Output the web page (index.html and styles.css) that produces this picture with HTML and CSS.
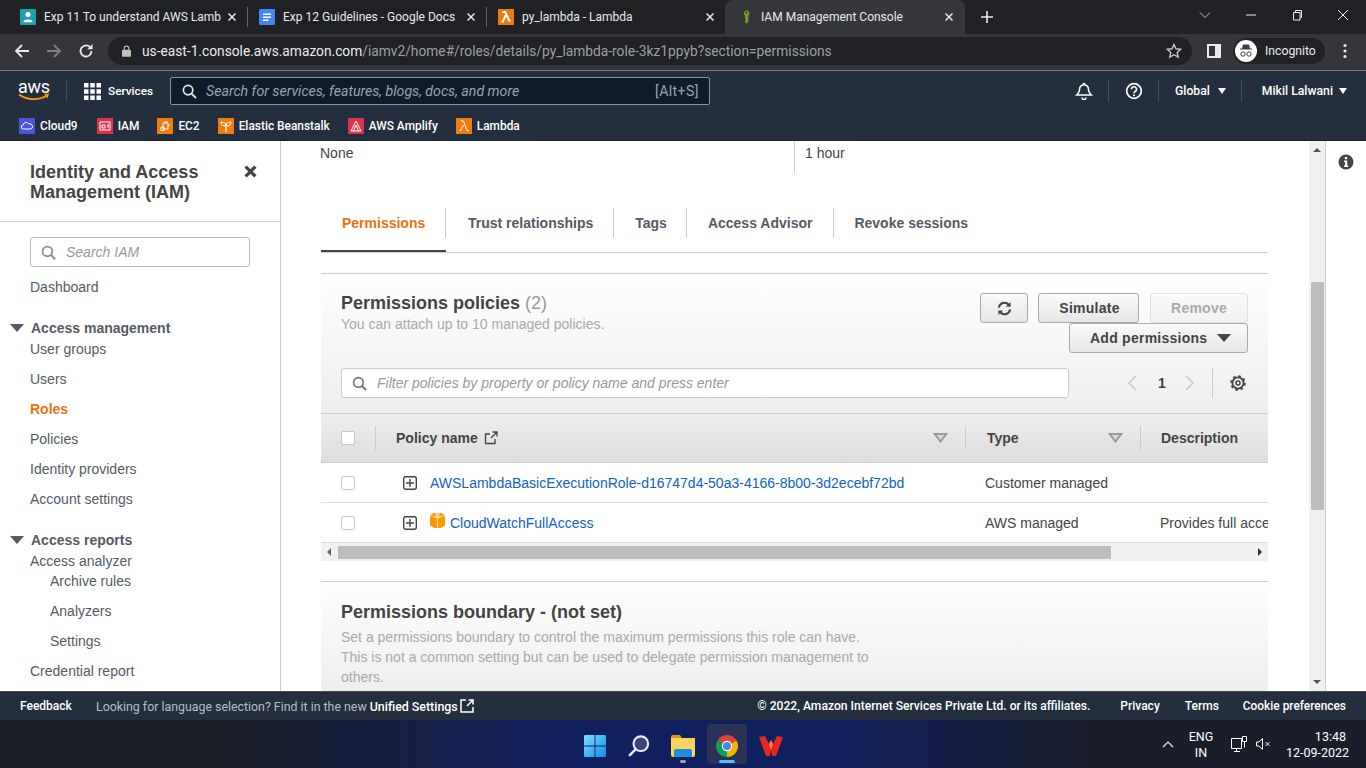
FILE: index.html
```html
<!DOCTYPE html>
<html lang="en">
<head>
    <meta charset="UTF-8">
    <title>IAM Management Console</title>
    <link rel="stylesheet" href="styles.css">
</head>
<body>

<!-- browser tabs -->
<div class="tabstrip">
    <div class="tab tab-first">
        <svg class="favicon" viewBox="0 0 16 16"><rect width="16" height="16" rx="1" fill="#1c9fb0"/><circle cx="8" cy="5.500" r="2.500" fill="#fff"/><path d="M3.500 12.500c0-2.800 9-2.800 9 0v.7h-9z" fill="#fff"/></svg>
        <span class="tab-title">Exp 11 To understand AWS Lamb</span>
        <svg class="tab-close" viewBox="0 0 8 8"><path d="M.5.5l7 7M7.500.5l-7 7" stroke="#e8eaed" stroke-width="1.500"/></svg>
    </div>
    <span class="tab-sep"></span>
    <div class="tab tab-second">
        <svg class="favicon" viewBox="0 0 16 16"><path d="M1.500 0H16v14.500a1.500 1.500 0 0 1-1.500 1.500h-13A1.500 1.500 0 0 1 0 14.500v-13A1.500 1.500 0 0 1 1.500 0z" fill="#4285f4"/><path d="M4 4.500h8v1.500H4zM4 7.500h8v1.500H4zM4 10.500h5.500v1.500H4z" fill="#fff"/></svg>
        <span class="tab-title">Exp 12 Guidelines - Google Docs</span>
        <svg class="tab-close" viewBox="0 0 8 8"><path d="M.5.5l7 7M7.500.5l-7 7" stroke="#e8eaed" stroke-width="1.500"/></svg>
    </div>
    <span class="tab-sep"></span>
    <div class="tab tab-third">
        <svg class="favicon" viewBox="0 0 16 16"><rect width="16" height="16" fill="#ed7d13"/><path d="M4.500 3h2.800l3.700 8.500h1.500M7.600 6.500L4.300 13.500" fill="none" stroke="#fff" stroke-width="2"/></svg>
        <span class="tab-title">py_lambda - Lambda</span>
        <svg class="tab-close" viewBox="0 0 8 8"><path d="M.5.5l7 7M7.500.5l-7 7" stroke="#e8eaed" stroke-width="1.500"/></svg>
    </div>
    <div class="tab tab-active">
        <svg class="favicon favicon-key" viewBox="0 0 12 18"><path d="M6 0a4 4 0 0 1 2.500 7.100V15L6 18l-2-2v-1.500l1.200-1-1.200-1 1-1-1-1V7.100A4 4 0 0 1 6 0z" fill="#6f9a2e"/><circle cx="6" cy="3" r="1.200" fill="#2c3a1a"/></svg>
        <span class="tab-title">IAM Management Console</span>
        <svg class="tab-close" viewBox="0 0 8 8"><path d="M.5.5l7 7M7.500.5l-7 7" stroke="#e8eaed" stroke-width="1.500"/></svg>
    </div>
    <svg class="new-tab" viewBox="0 0 12 12"><path d="M6 0v12M0 6h12" stroke="#e8eaed" stroke-width="1.600"/></svg>
    <div class="win-controls">
        <svg viewBox="0 0 12 12"><path d="M1 3.500l5 5 5-5" fill="none" stroke="#bdc1c6"/></svg>
        <svg viewBox="0 0 12 12"><path d="M1 6h10" stroke="#e8eaed"/></svg>
        <svg viewBox="0 0 12 12"><path d="M2.500 3.500h6.500v7.500H2.500zM4.500 3.500V1.500H10.500v7H9" fill="none" stroke="#e8eaed"/></svg>
        <svg viewBox="0 0 12 12"><path d="M1 1l10 10M11 1L1 11" stroke="#e8eaed"/></svg>
    </div>
</div>

<!-- address bar -->
<div class="toolbar">
    <svg class="tool-btn" viewBox="0 0 16 16"><path d="M15 8H2M8 2L2 8l6 6" fill="none" stroke="#e8eaed" stroke-width="1.800"/></svg>
    <svg class="tool-btn" viewBox="0 0 16 16"><path d="M1 8h13M8 2l6 6-6 6" fill="none" stroke="#7d7f83" stroke-width="1.800"/></svg>
    <svg class="tool-btn" viewBox="0 0 16 16"><path d="M13.500 8a5.500 5.500 0 1 1-1.700-4" fill="none" stroke="#e8eaed" stroke-width="1.800"/><path d="M14.500 1v5.200H9.300z" fill="#e8eaed"/></svg>
    <div class="omnibox">
        <svg class="lock" viewBox="0 0 10 13"><path d="M2.500 5V3.500a2.500 2.500 0 0 1 5 0V5" fill="none" stroke="#bdc1c6" stroke-width="1.300"/><rect y="5" width="10" height="8" rx="1" fill="#bdc1c6"/></svg>
        <span class="url"><span class="url-host">us-east-1.console.aws.amazon.com</span>/iamv2/home#/roles/details/py_lambda-role-3kz1ppyb?section=permissions</span>
        <svg class="star" viewBox="0 0 16 16"><path d="M8 1.500l2 4.300 4.700.5-3.500 3.200 1 4.600L8 11.700l-4.200 2.400 1-4.600L1.300 6.300 6 5.800z" fill="none" stroke="#c4c7cb" stroke-width="1.400"/></svg>
    </div>
    <svg class="side-panel" viewBox="0 0 14 14"><path d="M0 0h14v14H0z" fill="#e8eaed"/><path d="M2 2h6v10H2z" fill="#35363a"/></svg>
    <div class="profile">
        <svg class="profile-pic" viewBox="0 0 22 22"><circle cx="11" cy="11" r="11" fill="#fff"/><path d="M8 4.500h6l1 4h2v1H5v-1h2z" fill="#3c4043"/><circle cx="8" cy="14" r="2.200" fill="none" stroke="#3c4043"/><circle cx="14" cy="14" r="2.200" fill="none" stroke="#3c4043"/></svg>
        <span>Incognito</span>
    </div>
    <svg class="kebab" viewBox="0 0 4 16"><circle cx="2" cy="2.500" r="1.600" fill="#e8eaed"/><circle cx="2" cy="8" r="1.600" fill="#e8eaed"/><circle cx="2" cy="13.500" r="1.600" fill="#e8eaed"/></svg>
</div>

<!-- aws console header -->
<header class="aws-nav">
    <div class="nav-top">
        <div class="aws-logo">
            <span>aws</span>
            <svg viewBox="0 0 32 9"><path d="M1 1.500c8 6 20 6 28 1" fill="none" stroke="#f90" stroke-width="1.800"/><path d="M26 1l5-.5-1.500 5z" fill="#f90"/></svg>
        </div>
        <span class="nav-sep sep-logo"></span>
        <svg class="grid-icon" viewBox="0 0 17 17"><path d="M0 0h4.500v4.500H0zM6.250 0h4.500v4.500h-4.500zM12.500 0H17v4.500h-4.500zM0 6.250h4.500v4.500H0zM6.250 6.250h4.500v4.500h-4.500zM12.500 6.250H17v4.500h-4.500zM0 12.500h4.500V17H0zM6.250 12.500h4.500V17h-4.500zM12.500 12.500H17V17h-4.500z" fill="#fff"/></svg>
        <span class="services">Services</span>
        <div class="nav-search">
            <svg viewBox="0 0 16 16"><circle cx="6.500" cy="6.500" r="5" fill="none" stroke="#e6e8ea" stroke-width="1.800"/><path d="M10.200 10.200l4.800 4.800" stroke="#e6e8ea" stroke-width="2"/></svg>
            <span class="nav-search-text">Search for services, features, blogs, docs, and more</span>
            <span class="nav-search-key">[Alt+S]</span>
        </div>
        <div class="nav-right">
            <svg class="nav-icon" viewBox="0 0 18 18"><path d="M9 1.500a1 1 0 0 1 1 1v.6c2.500.5 3.500 2.500 3.500 5 0 2.500 2 3.900 3 5H1.500c1-1.100 3-2.500 3-5 0-2.500 1-4.500 3.500-5v-.6a1 1 0 0 1 1-1zM7 15.500a2 2 0 0 0 4 0" fill="none" stroke="#fff" stroke-width="1.500"/></svg>
            <span class="nav-sep"></span>
            <svg class="nav-icon" viewBox="0 0 18 18"><circle cx="9" cy="9" r="7.300" fill="none" stroke="#fff" stroke-width="1.700"/><path d="M6.500 7.200a2.500 2.500 0 1 1 3.600 2.300c-.8.400-1.100.8-1.100 1.800" fill="none" stroke="#fff" stroke-width="1.600"/><circle cx="9" cy="13.300" r="1" fill="#fff"/></svg>
            <span class="nav-sep"></span>
            <span class="nav-menu nav-global">Global<i class="nav-caret"></i></span>
            <span class="nav-sep"></span>
            <span class="nav-menu nav-user">Mikil Lalwani<i class="nav-caret"></i></span>
        </div>
    </div>
    <div class="bookmarks">
        <span class="bookmark"><svg viewBox="0 0 16 16"><rect width="16" height="16" fill="#4a55d9"/><path d="M4.500 11a2 2 0 0 1-.3-4 3 3 0 0 1 5.600-1 2.600 2.600 0 0 1 2 5z" fill="none" stroke="#fff"/></svg>Cloud9</span>
        <span class="bookmark"><svg viewBox="0 0 16 16"><rect width="16" height="16" fill="#dd344c"/><path d="M3 4h10v8H3z" fill="none" stroke="#fff"/><path d="M5 7h3v3H5zM10 7h2M10 9h2" fill="none" stroke="#fff"/></svg>IAM</span>
        <span class="bookmark"><svg viewBox="0 0 16 16"><rect width="16" height="16" fill="#ed7d13"/><path d="M6 5h5v6H6zM4 9h3v3.500H4zM8 3v2M10 3v2M11 7h2" fill="none" stroke="#fff"/></svg>EC2</span>
        <span class="bookmark"><svg viewBox="0 0 16 16"><rect width="16" height="16" fill="#ed7d13"/><path d="M8 14V6M8 8C5 8 3 7 3 4c3 0 5 1 5 4zM8 8c3 0 5-1 5-4-3 0-5 1-5 4z" fill="none" stroke="#fff"/></svg>Elastic Beanstalk</span>
        <span class="bookmark"><svg viewBox="0 0 16 16"><rect width="16" height="16" fill="#dd344c"/><path d="M8 3l5 10H3zM8 7l2.500 6M8 7l-2.500 6" fill="none" stroke="#fff"/></svg>AWS Amplify</span>
        <span class="bookmark"><svg viewBox="0 0 16 16"><rect width="16" height="16" fill="#ed7d13"/><path d="M5 3h2.500L11 12.500h2M7.500 7L4 13" fill="none" stroke="#fff"/></svg>Lambda</span>
    </div>
</header>

<main class="console">
    <aside class="sidebar">
        <div class="side-head">
            <h1>Identity and Access Management (IAM)</h1>
            <svg class="side-close" viewBox="0 0 12 12"><path d="M1.500 1.500l9 9M10.500 1.500l-9 9" stroke="#444" stroke-width="3"/></svg>
        </div>
        <div class="side-search">
            <svg class="search-ico" viewBox="0 0 14 14"><circle cx="6" cy="6" r="4.500" fill="none" stroke="#879596" stroke-width="1.800"/><path d="M9.200 9.200l4 4" stroke="#879596" stroke-width="2"/></svg>
            <span>Search IAM</span>
        </div>
        <a class="side-link side-dash">Dashboard</a>
        <div class="side-group"><i class="group-caret"></i>Access management</div>
        <a class="side-link side-first">User groups</a>
        <a class="side-link">Users</a>
        <a class="side-link side-active">Roles</a>
        <a class="side-link">Policies</a>
        <a class="side-link">Identity providers</a>
        <a class="side-link">Account settings</a>
        <div class="side-group"><i class="group-caret"></i>Access reports</div>
        <a class="side-link side-first side-short">Access analyzer</a>
        <a class="side-link side-sub">Archive rules</a>
        <a class="side-link side-sub">Analyzers</a>
        <a class="side-link side-sub">Settings</a>
        <a class="side-link">Credential report</a>
    </aside>

    <div class="content">
        <div class="summary">
            <div class="summary-cell summary-left">None</div>
            <div class="summary-cell summary-right">1 hour</div>
        </div>

        <div class="tabs">
            <div class="tabs-item tabs-active"><span class="tabs-label">Permissions</span></div>
            <div class="tabs-item"><span class="tabs-label tabs-trust">Trust relationships</span></div>
            <div class="tabs-item"><span class="tabs-label tabs-tags">Tags</span></div>
            <div class="tabs-item"><span class="tabs-label">Access Advisor</span></div>
            <div class="tabs-item"><span class="tabs-label tabs-last">Revoke sessions</span></div>
        </div>

        <section class="panel">
            <div class="panel-head">
                <div class="panel-titles">
                    <h2>Permissions policies <span class="count">(2)</span></h2>
                    <p>You can attach up to 10 managed policies.</p>
                </div>
                <div class="panel-actions">
                    <div class="action-row">
                        <button class="btn btn-icon">
                            <svg viewBox="0 0 16 16"><path d="M2 7a6 6 0 0 1 10.500-3M14 9a6 6 0 0 1-10.500 3" fill="none" stroke="#444" stroke-width="2.200"/><path d="M14.500 1v5h-5zM1.500 15v-5h5z" fill="#444"/></svg>
                        </button>
                        <button class="btn btn-sim">Simulate</button>
                        <button class="btn btn-remove">Remove</button>
                    </div>
                    <button class="btn btn-add">Add permissions <i class="btn-caret"></i></button>
                </div>
            </div>
            <div class="filter-row">
                <div class="filter">
                    <svg class="search-ico" viewBox="0 0 14 14"><circle cx="6" cy="6" r="4.500" fill="none" stroke="#687078" stroke-width="1.500"/><path d="M9.200 9.200l4 4" stroke="#687078" stroke-width="1.800"/></svg>
                    <span>Filter policies by property or policy name and press enter</span>
                </div>
                <div class="pager">
                    <svg viewBox="0 0 10 16"><path d="M9 1L2 8l7 7" fill="none" stroke="#c6cacc" stroke-width="1.500"/></svg>
                    <span class="pager-num">1</span>
                    <svg viewBox="0 0 10 16"><path d="M1 1l7 7-7 7" fill="none" stroke="#c6cacc" stroke-width="1.500"/></svg>
                </div>
                <div class="pager-gear">
                    <svg viewBox="0 0 16 16"><circle cx="8" cy="8" r="5.600" fill="none" stroke="#444" stroke-width="1.800"/><circle cx="8" cy="8" r="7" fill="none" stroke="#444" stroke-width="1.600" stroke-dasharray="2.700 2.800"/><circle cx="8" cy="8" r="2" fill="none" stroke="#444" stroke-width="1.500"/></svg>
                </div>
            </div>
        </section>

        <div class="table-wrap">
            <table class="policy-table">
                <colgroup>
                    <col class="col-check"><col class="col-name"><col class="col-type"><col class="col-desc">
                </colgroup>
                <thead>
                    <tr>
                        <th><div class="th-cell th-check"><span class="checkbox"></span></div></th>
                        <th><div class="th-cell">Policy name
                            <svg class="ext-link" viewBox="0 0 14 14"><path d="M11 8v4.500H1.500V3H6M7 7l6-6M8.500 1H13v4.500" fill="none" stroke="#444" stroke-width="1.300"/></svg>
                            <svg class="sort-caret" viewBox="0 0 15 10"><path d="M1.800 1h11.400L7.500 8.500z" fill="#d8d8d8" stroke="#999" stroke-width="2"/></svg></div></th>
                        <th><div class="th-cell th-type">Type<svg class="sort-caret" viewBox="0 0 15 10"><path d="M1.800 1h11.400L7.500 8.500z" fill="#d8d8d8" stroke="#999" stroke-width="2"/></svg></div></th>
                        <th><div class="th-cell th-last">Description</div></th>
                    </tr>
                </thead>
                <tbody>
                    <tr>
                        <td><span class="checkbox"></span></td>
                        <td><div class="name-cell">
                            <svg class="expand" viewBox="0 0 14 14"><rect x=".7" y=".7" width="12.600" height="12.600" rx="2" fill="none" stroke="#444" stroke-width="1.400"/><path d="M7 3v8M3 7h8" stroke="#444" stroke-width="1.400"/></svg>
                            <a class="policy-link">AWSLambdaBasicExecutionRole-d16747d4-50a3-4166-8b00-3d2ecebf72bd</a>
                        </div></td>
                        <td class="td-text">Customer managed</td>
                        <td class="td-text"></td>
                    </tr>
                    <tr>
                        <td><span class="checkbox"></span></td>
                        <td><div class="name-cell">
                            <svg class="expand" viewBox="0 0 14 14"><rect x=".7" y=".7" width="12.600" height="12.600" rx="2" fill="none" stroke="#444" stroke-width="1.400"/><path d="M7 3v8M3 7h8" stroke="#444" stroke-width="1.400"/></svg>
                            <svg class="cube" viewBox="0 0 15 15"><path d="M0 2.500L3.500 0h8L15 2.500v10L11 15H4L0 12.500z" fill="#f90"/><path d="M5.500 0h4v5h-4z" fill="#ffd28a"/><path d="M0 2.500L7.500 5 15 2.500M7.500 5v10" fill="none" stroke="#fff" stroke-width=".6"/></svg>
                            <a class="policy-link">CloudWatchFullAccess</a>
                        </div></td>
                        <td class="td-text">AWS managed</td>
                        <td class="td-text">Provides full acce</td>
                    </tr>
                </tbody>
            </table>
            <div class="hscroll">
                <i class="arrow-left"></i>
                <div class="hscroll-thumb"></div>
                <i class="arrow-right"></i>
            </div>
        </div>

        <section class="boundary">
            <h2>Permissions boundary - (not set)</h2>
            <p>Set a permissions boundary to control the maximum permissions this role can have. This is not a common setting but can be used to delegate permission management to others.</p>
        </section>
    </div>

    <div class="vscroll">
        <i class="arrow-up"></i>
        <div class="vscroll-thumb"></div>
        <i class="arrow-down"></i>
    </div>

    <div class="info-rail">
        <svg viewBox="0 0 16 16"><circle cx="8" cy="8" r="7.500" fill="#444"/><path d="M6.800 3h2.400v2.200H6.800zM6 6.500h3.200v5h1v1.500H6v-1.500h1v-3.500H6z" fill="#fff"/></svg>
    </div>
</main>

<footer class="console-foot">
    <span class="foot-feedback">Feedback</span>
    <span class="foot-msg">Looking for language selection? Find it in the new <span class="foot-strong">Unified Settings</span></span>
    <svg class="foot-ext" viewBox="0 0 14 14"><path d="M6 1H1v12h12V8M7 7l5.500-5.500M8.500 1H13v4.500" fill="none" stroke="#fff" stroke-width="1.500"/></svg>
    <div class="foot-right">
        <span class="foot-copy">© 2022, Amazon Internet Services Private Ltd. or its affiliates.</span>
        <span class="foot-privacy">Privacy</span>
        <span class="foot-terms">Terms</span>
        <span class="foot-cookie">Cookie preferences</span>
    </div>
</footer>

<!-- windows taskbar -->
<div class="taskbar">
    <div></div>
    <div class="task-icons">
        <span class="task-slot">
            <svg viewBox="0 0 24 24"><defs><linearGradient id="win" x1="0" y1="0" x2="1" y2="1"><stop offset="0" stop-color="#7fe0ff"/><stop offset="1" stop-color="#0a8be8"/></linearGradient></defs><path d="M0 1.500A1.500 1.500 0 0 1 1.500 0h10v11.500H0zM12.500 0h10A1.500 1.500 0 0 1 24 1.500v10H12.500zM0 12.500h11.500V24h-10A1.500 1.500 0 0 1 0 22.500zM12.500 12.500H24v10a1.500 1.500 0 0 1-1.500 1.500h-10z" fill="url(#win)"/></svg>
        </span>
        <span class="task-slot">
            <svg viewBox="0 0 24 24"><circle cx="14" cy="9.500" r="8" fill="#3a4577" stroke="#e8ecf4" stroke-width="2.300"/><path d="M8 16l-6 6" stroke="#e8ecf4" stroke-width="2.800" stroke-linecap="round"/></svg>
        </span>
        <span class="task-slot">
            <svg viewBox="0 0 24 22"><path d="M0 2a2 2 0 0 1 2-2h7l2 3h-11z" fill="#d49a12"/><path d="M0 3h24v17a2 2 0 0 1-2 2H2a2 2 0 0 1-2-2z" fill="#fbd35d"/><path d="M5 14h14a2 2 0 0 1 2 2v6H3v-6a2 2 0 0 1 2-2z" fill="#1b8fdc"/></svg>
            <i class="task-dot"></i>
        </span>
        <span class="task-slot task-active">
            <svg viewBox="0 0 24 24"><path d="M12 12L1.600 6A12 12 0 0 1 22.400 6z" fill="#db4437"/><path d="M12 12L22.400 6A12 12 0 0 1 12 24z" fill="#f4b400"/><path d="M12 12V24A12 12 0 0 1 1.600 6z" fill="#0f9d58"/><circle cx="12" cy="12" r="5.600" fill="#fff"/><circle cx="12" cy="12" r="4.400" fill="#4285f4"/></svg>
            <i class="task-bar"></i>
        </span>
        <span class="task-slot">
            <svg viewBox="0 0 24 20"><path d="M0 1l6-1 4 8 2-4 2 4 4-8 6 1-7 19h-4l-1-6-1 6H7z" fill="#e5281f"/><path d="M12 4l2 4-2 6-2-6z" fill="#ff7a59"/></svg>
        </span>
    </div>
    <div class="tray">
        <svg class="tray-up" viewBox="0 0 12 8"><path d="M1 7l5-5 5 5" fill="none" stroke="#e8eaed" stroke-width="1.200"/></svg>
        <div class="tray-lang">ENG<br>IN</div>
        <svg class="tray-net" viewBox="0 0 16 17"><path d="M.5 2.500h10v10H.5zM5.500 12.500v3M3 15.500h6" fill="none" stroke="#fff"/><path d="M11.500 .5h4v5h-4zM13.500 5.500v6" fill="#11182c" stroke="#fff"/></svg>
        <svg class="tray-vol" viewBox="0 0 16 14"><path d="M.5 5h2.500l3.500-3.500v11L3 9H.5zM9.500 5l4 4M13.500 5l-4 4" fill="none" stroke="#fff"/></svg>
        <div class="tray-clock">13:48<br>12-09-2022</div>
    </div>
</div>

</body>
</html>
```

FILE: styles.css
```css
* {
    box-sizing: border-box;
}
body {
    margin: 0;
    width: 1366px;
    height: 768px;
    overflow: hidden;
    display: flex;
    flex-direction: column;
    font-family: "Liberation Sans", Arial, sans-serif;
    font-size: 14px;
    color: #444;
    background: #fff;
}

/* browser tabs */
.tabstrip {
    height: 34px;
    flex: none;
    display: flex;
    align-items: center;
    background: #202124;
    font-family: Roboto, sans-serif;
    font-size: 12px;
    color: #e8eaed;
}
.tab {
    height: 34px;
    display: flex;
    align-items: center;
    flex: none;
}
.tab-sep {
    width: 1px;
    height: 20px;
    flex: none;
    background: #5f6368;
}
.tab-first {
    width: 247px;
    padding-left: 20px;
}
.tab-second,
.tab-third {
    width: 238px;
    padding-left: 11px;
}
.tab-active {
    width: 240px;
    padding-left: 17px;
    background: #35363a;
    border-radius: 8px 8px 0 0;
}
.favicon {
    width: 16px;
    height: 16px;
    flex: none;
}
.favicon-key {
    width: 9px;
}
.tab-title {
    margin-left: 8px;
    white-space: nowrap;
    overflow: hidden;
    flex: 1;
}
.tab-active .tab-title {
    margin-left: 10px;
}
.tab-close {
    flex: none;
    width: 8px;
    height: 8px;
    margin-right: 11px;
}
.tab-active .tab-close {
    margin-right: 12px;
}
.new-tab {
    width: 12px;
    height: 12px;
    margin-left: 16px;
}
.win-controls {
    margin-left: auto;
    display: flex;
    gap: 34px;
    padding-right: 17px;
    margin-top: -5px;
}
.win-controls svg {
    width: 12px;
    height: 12px;
}

/* address bar */
.toolbar {
    height: 37px;
    flex: none;
    display: flex;
    align-items: center;
    padding: 0 0 2px 14px;
    background: #35363a;
    border-bottom: 1px solid #7b7c7f;
}
.tool-btn {
    width: 16px;
    height: 16px;
    margin-right: 16px;
    flex: none;
}
.omnibox {
    width: 1084px;
    height: 28px;
    margin-left: -2px;
    flex: none;
    display: flex;
    align-items: center;
    padding: 0 10px 0 14px;
    background: #202124;
    border-radius: 14px;
    font-family: Roboto, sans-serif;
    font-size: 13.75px;
    color: #9aa0a6;
}
.lock {
    width: 9px;
    height: 12px;
    margin-right: 11px;
}
.url {
    flex: 1;
    white-space: nowrap;
}
.url-host {
    color: #e8eaed;
}
.star {
    width: 16px;
    height: 16px;
}
.side-panel {
    width: 14px;
    height: 14px;
    margin-left: 15px;
}
.profile {
    width: 92px;
    height: 26px;
    margin-left: 12px;
    display: flex;
    align-items: center;
    gap: 8px;
    padding-left: 2px;
    background: #202124;
    border-radius: 13px;
    font-family: Roboto, sans-serif;
    font-size: 12.2px;
    color: #e8eaed;
}
.profile-pic {
    width: 22px;
    height: 22px;
}
.kebab {
    width: 4px;
    height: 16px;
    margin-left: 18px;
}

/* aws header */
.aws-nav {
    height: 70px;
    flex: none;
    background: #232f3e;
    border-bottom: 1px solid #1b2532;
    font-family: Roboto, sans-serif;
    font-size: 12.2px;
    font-weight: 500;
    color: #fff;
}
.nav-top {
    height: 40px;
    display: flex;
    align-items: center;
}
.aws-logo {
    width: 32px;
    margin-left: 18px;
    flex: none;
    line-height: 12px;
}
.aws-logo span {
    display: block;
    font-size: 18px;
    font-weight: 400;
    letter-spacing: -.3px;
}
.aws-logo svg {
    display: block;
    width: 32px;
    height: 9px;
}
.nav-sep {
    width: 1px;
    height: 22px;
    flex: none;
    background: #414d5c;
}
.sep-logo {
    margin-left: 16px;
}
.grid-icon {
    width: 17px;
    height: 17px;
    margin-left: 17px;
    flex: none;
}
.services {
    width: 62px;
    margin-left: 7px;
    flex: none;
    font-size: 11.8px;
}
.nav-search {
    width: 540px;
    height: 28px;
    flex: none;
    display: flex;
    align-items: center;
    padding: 0 10px 0 11px;
    background: #0f1b2a;
    border: 1px solid #879596;
    border-radius: 2px;
    font-size: 14.15px;
    font-weight: 400;
    color: #98a2ac;
}
.nav-search svg {
    width: 15px;
    height: 15px;
    margin-right: 9px;
}
.nav-search-text {
    flex: 1;
    font-style: italic;
}
.nav-search-key {
    letter-spacing: .4px;
}
.nav-right {
    margin-left: auto;
    display: flex;
    align-items: center;
    padding-right: 19px;
}
.nav-icon {
    width: 18px;
    height: 18px;
    margin: 0 15px 0 16px;
}
.nav-menu {
    display: flex;
    align-items: center;
    white-space: nowrap;
}
.nav-global {
    margin: 0 15px 0 16px;
}
.nav-global .nav-caret {
    margin-left: 8px;
}
.nav-user {
    margin-left: 20px;
}
.nav-user .nav-caret {
    margin-left: 6px;
}
.nav-caret {
    width: 0;
    height: 0;
    border-left: 4.500px solid transparent;
    border-right: 4.500px solid transparent;
    border-top: 6px solid #fff;
}
.bookmarks {
    height: 30px;
    display: flex;
    align-items: center;
    gap: 18px;
    padding-left: 19px;
    font-size: 11.9px;
}
.bookmark {
    display: flex;
    align-items: center;
    gap: 5px;
}
.bookmark:first-child {
    margin-right: 1px;
}
.bookmark svg {
    width: 16px;
    height: 16px;
}

/* page */
.console {
    flex: 1;
    min-height: 0;
    display: flex;
}
.sidebar {
    width: 281px;
    flex: none;
    overflow: hidden;
    border-right: 1px solid #ccc;
    color: #545b64;
}
.side-head {
    height: 81px;
    display: flex;
    justify-content: space-between;
    padding: 21px 23px 0 30px;
    border-bottom: 1px solid #ccc;
}
.side-head h1 {
    width: 190px;
    margin: 0;
    font-size: 18px;
    line-height: 20px;
    color: #444;
}
.side-close {
    width: 13px;
    height: 13px;
    margin-top: 3px;
}
.side-search {
    width: 220px;
    height: 30px;
    margin: 15px 0 0 30px;
    display: flex;
    align-items: center;
    gap: 10px;
    padding-left: 10px;
    border: 1px solid #bbb;
    border-radius: 3px;
    font-style: italic;
    color: #999;
}
.search-ico {
    width: 15px;
    height: 15px;
    flex: none;
}
.side-link {
    display: block;
    height: 30px;
    line-height: 30px;
    padding-left: 30px;
}
.side-dash {
    margin-top: 5px;
}
.side-group {
    height: 20px;
    line-height: 20px;
    margin-top: 16px;
    display: flex;
    align-items: center;
    font-weight: bold;
}
.side-first {
    margin-top: -4px;
}
.side-short {
    margin-bottom: -10px;
}
.side-sub {
    padding-left: 50px;
}
.side-active {
    font-weight: bold;
    color: #ec7211;
}
.group-caret {
    width: 0;
    height: 0;
    margin: 0 7px 0 10px;
    border-left: 7px solid transparent;
    border-right: 7px solid transparent;
    border-top: 8px solid #545b64;
}
.content {
    flex: 1;
    min-width: 0;
    padding: 0 41px 0 40px;
    overflow: hidden;
}
.summary {
    height: 32px;
    margin-left: -1px;
    display: flex;
}
.summary-cell {
    padding-top: 4px;
    line-height: 16px;
}
.summary-left {
    width: 475px;
    border-right: 1px solid #ccc;
}
.summary-right {
    padding-left: 10px;
}
.tabs {
    height: 48px;
    margin-top: 32px;
    margin-bottom: 20px;
    display: flex;
    border-bottom: 1px solid #ccc;
}
.tabs-item {
    height: 47px;
    padding-top: 3px;
}
.tabs-label {
    display: block;
    height: 30px;
    padding: 0 21px;
    line-height: 30px;
    font-weight: bold;
    color: #545b64;
    border-right: 1px solid #ccc;
    white-space: nowrap;
}
.tabs-trust {
    padding: 0 20px 0 22px;
}
.tabs-tags {
    padding-right: 19px;
}
.tabs-last {
    padding-left: 20px;
    border-right: none;
}
.tabs-active {
    width: 125px;
    border-bottom: 2px solid #444;
}
.tabs-active .tabs-label {
    color: #ec7211;
}
.panel {
    height: 141px;
    padding: 19px 20px 0;
    border-top: 1px solid #ccc;
    border-bottom: 1px solid #ccc;
    background: linear-gradient(#fff, #eee);
}
.panel-head {
    height: 60px;
    display: flex;
    justify-content: space-between;
}
.panel-titles h2 {
    margin: 0;
    font-size: 18px;
    line-height: 20px;
    color: #444;
}
.count {
    font-weight: normal;
    color: #999;
}
.panel-titles p {
    margin: 1px 0 0;
    line-height: 20px;
    color: #aaa;
}
.panel-actions {
    display: flex;
    flex-direction: column;
    align-items: flex-end;
}
.action-row {
    display: flex;
    gap: 11px;
}
.btn {
    height: 30px;
    padding: 0;
    font-family: "Liberation Sans", Arial, sans-serif;
    font-size: 14px;
    font-weight: bold;
    letter-spacing: .25px;
    color: #444;
    background: linear-gradient(#fafafa, #e6e6e6);
    border: 1px solid #aaa;
    border-radius: 3px;
}
.btn-icon {
    width: 48px;
    margin-right: -1px;
    display: flex;
    align-items: center;
    justify-content: center;
}
.btn-icon svg {
    width: 15px;
    height: 15px;
}
.btn-sim {
    width: 101px;
    padding-left: 2px;
}
.btn-remove {
    width: 98px;
    color: #aaa;
    background: linear-gradient(#fafafa, #f2f2f2);
    border-color: #e1e1e1;
}
.btn-add {
    width: 179px;
    display: flex;
    align-items: center;
    gap: 10px;
    padding-left: 20px;
}
.btn-caret {
    width: 0;
    height: 0;
    border-left: 7.500px solid transparent;
    border-right: 7.500px solid transparent;
    border-top: 8px solid #444;
}
.filter-row {
    height: 30px;
    margin-top: 15px;
    display: flex;
    align-items: center;
}
.filter {
    width: 728px;
    height: 30px;
    flex: none;
    display: flex;
    align-items: center;
    gap: 10px;
    padding-left: 10px;
    background: #fff;
    border: 1px solid #ccc;
    border-radius: 3px;
    font-style: italic;
    color: #999;
}
.pager {
    margin-left: 58px;
    flex: none;
    display: flex;
    align-items: center;
    gap: 20px;
    font-weight: bold;
}
.pager svg {
    width: 10px;
    height: 16px;
}
.pager-num {
    margin: 0 -1px 0 1px;
}
.pager-gear {
    height: 30px;
    margin-left: 17px;
    padding-left: 17px;
    flex: none;
    display: flex;
    align-items: center;
    border-left: 1px solid #ccc;
}
.pager-gear svg {
    width: 16px;
    height: 16px;
}
.table-wrap {
    width: 947px;
    overflow: hidden;
}
.policy-table {
    width: 947px;
    table-layout: fixed;
    border-collapse: separate;
    border-spacing: 0;
}
.col-check {
    width: 55px;
}
.col-name {
    width: 590px;
}
.col-type {
    width: 175px;
}
.col-desc {
    width: 127px;
}
.policy-table th {
    height: 49px;
    padding: 0;
    text-align: left;
    border-bottom: 1px solid #ccc;
    background: linear-gradient(#eee, #ddd);
}
.th-cell {
    height: 24px;
    display: flex;
    align-items: center;
    padding: 0 17px 0 20px;
    border-right: 1px solid #ccc;
}
.th-type {
    padding-left: 21px;
}
.th-last {
    border-right: none;
    white-space: nowrap;
}
.ext-link {
    width: 14px;
    height: 14px;
    margin-left: 6px;
}
.sort-caret {
    width: 15px;
    height: 10px;
    margin-left: auto;
    flex: none;
}
.checkbox {
    display: block;
    width: 14px;
    height: 14px;
    background: #fff;
    border: 1px solid #c8c8c8;
    border-radius: 2px;
}
.policy-table td {
    height: 40px;
    padding: 0;
    border-bottom: 1px solid #ddd;
    white-space: nowrap;
}
.policy-table td:first-child {
    padding-left: 20px;
}
.policy-table .td-text {
    padding-left: 19px;
    color: #444;
}
.name-cell {
    display: flex;
    align-items: center;
    padding-left: 27px;
}
.expand {
    width: 14px;
    height: 14px;
    margin-right: 13px;
    flex: none;
}
.cube {
    width: 15px;
    height: 15px;
    margin: -4px 5px 0 0;
    flex: none;
}
.policy-link {
    color: #0f62c5;
}
.hscroll {
    height: 18px;
    display: flex;
    align-items: center;
    background: #f1f1f1;
}
.hscroll-thumb {
    width: 773px;
    height: 13px;
    margin-left: 7px;
    background: #bdbdbd;
}
.arrow-left {
    width: 0;
    height: 0;
    margin-left: 6px;
    border-top: 4px solid transparent;
    border-bottom: 4px solid transparent;
    border-right: 4px solid #666;
}
.arrow-right {
    width: 0;
    height: 0;
    margin-left: auto;
    margin-right: 6px;
    border-top: 4px solid transparent;
    border-bottom: 4px solid transparent;
    border-left: 4px solid #333;
}
.boundary {
    margin-top: 20px;
    padding: 20px 20px 0;
    height: 110px;
    border-top: 1px solid #ccc;
    background: linear-gradient(#fff, #eee);
}
.boundary h2 {
    margin: 0;
    font-size: 18px;
    line-height: 20px;
    color: #444;
}
.boundary p {
    width: 535px;
    margin: 5px 0 0;
    line-height: 20px;
    color: #aaa;
}
.vscroll {
    width: 17px;
    flex: none;
    display: flex;
    flex-direction: column;
    align-items: center;
    background: #f0f0f0;
    border-right: 1px solid #ccc;
}
.arrow-up {
    width: 0;
    height: 0;
    margin-top: 7px;
    border-left: 4px solid transparent;
    border-right: 4px solid transparent;
    border-bottom: 4px solid #555;
}
.arrow-down {
    width: 0;
    height: 0;
    margin-top: auto;
    margin-bottom: 7px;
    border-left: 4px solid transparent;
    border-right: 4px solid transparent;
    border-top: 4px solid #555;
}
.vscroll-thumb {
    width: 13px;
    height: 228px;
    margin-top: 130px;
    background: #bdbdbd;
}
.info-rail {
    width: 40px;
    flex: none;
    display: flex;
    justify-content: center;
    padding-top: 13px;
}
.info-rail svg {
    width: 16px;
    height: 16px;
}

/* console footer */
.console-foot {
    height: 29px;
    flex: none;
    display: flex;
    align-items: center;
    padding: 0 20px;
    background: #232f3e;
    border-top: 1px solid #414d5c;
    font-family: Roboto, sans-serif;
    font-size: 12px;
    font-weight: 500;
    color: #fff;
}
.foot-feedback {
    width: 76px;
}
.foot-msg {
    font-size: 12.37px;
    font-weight: 400;
    color: #b6bec9;
}
.foot-strong {
    font-size: 12.4px;
    font-weight: 500;
    color: #fff;
}
.foot-ext {
    width: 14px;
    height: 14px;
    margin-left: 2px;
}
.foot-right {
    margin-left: auto;
    display: flex;
}
.foot-copy {
    font-size: 12.1px;
}
.foot-privacy {
    margin-left: 30px;
}
.foot-terms {
    margin-left: 25px;
}
.foot-cookie {
    margin-left: 24px;
    font-size: 11.9px;
}

/* taskbar */
.taskbar {
    height: 48px;
    flex: none;
    display: grid;
    grid-template-columns: 1fr auto 1fr;
    align-items: center;
    background: linear-gradient(90deg, #1c1f26 15%, #101f5e 42%, #101f5e 60%, #1a1e2b 80%);
    font-family: Roboto, sans-serif;
    font-size: 12.5px;
    color: #fff;
}
.task-icons {
    display: flex;
}
.task-slot {
    position: relative;
    width: 44px;
    height: 40px;
    display: flex;
    align-items: center;
    justify-content: center;
    border-radius: 4px;
}
.task-slot svg {
    width: 24px;
    height: 22px;
    margin-top: 3px;
}
.task-active {
    width: 40px;
    margin: 0 2px;
    background: #2a3257;
}
.task-dot {
    position: absolute;
    left: 19px;
    bottom: 1px;
    width: 6px;
    height: 3px;
    border-radius: 2px;
    background: #9aa3b5;
}
.task-bar {
    position: absolute;
    left: 12px;
    bottom: 1px;
    width: 16px;
    height: 3px;
    border-radius: 2px;
    background: #4cc2ff;
}
.tray {
    display: flex;
    align-items: center;
    justify-content: flex-end;
    padding-right: 20px;
}
.tray-up {
    width: 12px;
    height: 8px;
    margin-right: 14px;
}
.tray-lang {
    width: 26px;
    margin: 2px 17px 0 0;
    line-height: 16px;
    text-align: center;
}
.tray-net {
    width: 16px;
    height: 17px;
    margin-right: 9px;
}
.tray-vol {
    width: 16px;
    height: 14px;
    margin-right: 14px;
}
.tray-clock {
    width: 60px;
    margin-top: 2px;
    line-height: 16px;
    text-align: right;
    white-space: nowrap;
}
```
